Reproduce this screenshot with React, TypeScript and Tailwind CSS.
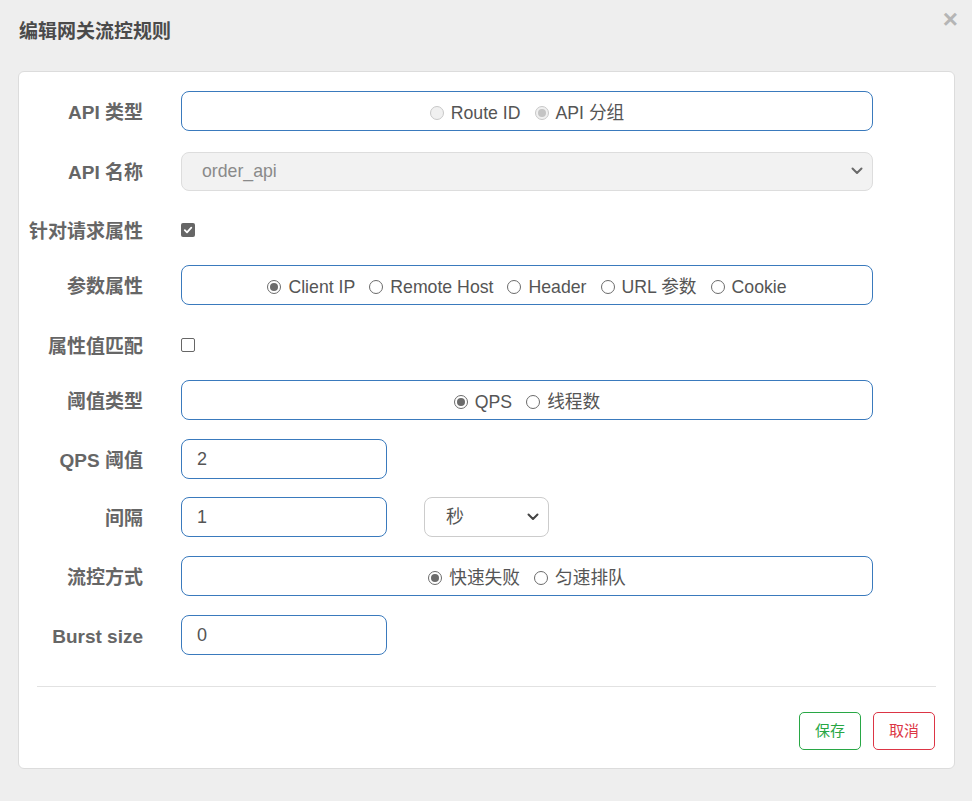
import React from "react";

const FONT = '"Liberation Sans", Arial, "Noto Sans CJK SC", sans-serif';

function Radio({ checked, disabled, label }: { checked?: boolean; disabled?: boolean; label: string }) {
  const outer = disabled ? "border-[#c8c8c8] bg-[#f0f0f0]" : "border-[#6b6b6b] bg-white";
  const dot = disabled ? "bg-[#c4c4c4]" : "bg-[#6b6b6b]";
  return (
    <span className="inline-flex items-center gap-[7px]">
      <span className={`w-[14px] h-[14px] rounded-full border flex items-center justify-center ${outer}`}>
        {checked && <span className={`w-[8px] h-[8px] rounded-full ${dot}`} />}
      </span>
      <span>{label}</span>
    </span>
  );
}

function Row({ label, mt, children }: { label: string; mt: string; children: React.ReactNode }) {
  return (
    <div className={`flex items-center h-[40px] ${mt}`}>
      <div className="w-[124px] text-right font-bold text-[19px] text-[#666666] leading-none pt-[3px]">{label}</div>
      <div className="ml-[38px] flex items-center">{children}</div>
    </div>
  );
}

function RadioBox({ children }: { children: React.ReactNode }) {
  return (
    <div className="w-[692px] h-[40px] border border-[#3a7abd] rounded-[8px] flex items-center justify-center gap-[14px] pt-[4px] text-[17.7px] text-[#555555]">
      {children}
    </div>
  );
}

function TextInput({ value }: { value: string }) {
  return (
    <div className="w-[206px] h-[40px] border border-[#3a7abd] rounded-[8px] flex items-center pl-[15px] text-[18px] text-[#555555]">
      {value}
    </div>
  );
}

function Chevron({ color = "#555" }: { color?: string }) {
  return (
    <svg width="12" height="8" viewBox="0 0 12 8" fill="none">
      <path d="M1.5 1.5 L6 6 L10.5 1.5" stroke={color} strokeWidth="2" strokeLinecap="round" strokeLinejoin="round" />
    </svg>
  );
}

export default function App() {
  return (
    <div className="w-[972px] h-[801px] bg-[#eeeeee] relative overflow-hidden" style={{ fontFamily: FONT }}>
      <div className="absolute right-[14px] top-[6px] text-[26px] leading-none font-bold text-[#b5b5b5]">×</div>
      <div className="pl-[19px] pt-[21px] h-[71px] text-[19px] font-bold text-[#4a4a4a] leading-[22px]">编辑网关流控规则</div>
      <div className="ml-[18px] w-[937px] h-[698px] bg-white border border-[#dcdcdc] rounded-[6px] flex flex-col">
        <Row label="API 类型" mt="mt-[19px]">
          <RadioBox>
            <Radio disabled label="Route ID" />
            <Radio disabled checked label="API 分组" />
          </RadioBox>
        </Row>
        <Row label="API 名称" mt="mt-[20px]">
          <div className="w-[692px] h-[39px] border border-[#dddddd] bg-[#f2f2f2] rounded-[8px] flex items-center justify-between pl-[20px] pr-[9px] text-[17.7px] text-[#8a8a8a]">
            <span>order_api</span>
            <Chevron color="#6a6a6a" />
          </div>
        </Row>
        <Row label="针对请求属性" mt="mt-[19px]">
          <span className="w-[14px] h-[14px] rounded-[2px] bg-[#666666] flex items-center justify-center">
            <svg width="10" height="10" viewBox="0 0 10 10" fill="none">
              <path d="M1.8 5.2 L4 7.4 L8.3 2.6" stroke="white" strokeWidth="1.8" strokeLinecap="round" strokeLinejoin="round" />
            </svg>
          </span>
        </Row>
        <Row label="参数属性" mt="mt-[15px]">
          <RadioBox>
            <Radio checked label="Client IP" />
            <Radio label="Remote Host" />
            <Radio label="Header" />
            <Radio label="URL 参数" />
            <Radio label="Cookie" />
          </RadioBox>
        </Row>
        <Row label="属性值匹配" mt="mt-[20px]">
          <span className="w-[14px] h-[14px] rounded-[2px] border border-[#666666] bg-white" />
        </Row>
        <Row label="阈值类型" mt="mt-[15px]">
          <RadioBox>
            <Radio checked label="QPS" />
            <Radio label="线程数" />
          </RadioBox>
        </Row>
        <Row label="QPS 阈值" mt="mt-[19px]">
          <TextInput value="2" />
        </Row>
        <Row label="间隔" mt="mt-[18px]">
          <TextInput value="1" />
          <div className="ml-[37px] w-[125px] h-[40px] border border-[#cccccc] rounded-[8px] flex items-center justify-between pl-[21px] pr-[9px] text-[18px] text-[#555555]">
            <span>秒</span>
            <Chevron color="#444" />
          </div>
        </Row>
        <Row label="流控方式" mt="mt-[19px]">
          <RadioBox>
            <Radio checked label="快速失败" />
            <Radio label="匀速排队" />
          </RadioBox>
        </Row>
        <Row label="Burst size" mt="mt-[19px]">
          <TextInput value="0" />
        </Row>
        <div className="mt-[31px] mx-[18px] h-px bg-[#e2e2e2]" />
        <div className="mt-[25px] mr-[19px] flex justify-end gap-[12px]">
          <div className="w-[62px] h-[38px] border border-[#28a745] rounded-[5px] flex items-center justify-center text-[15px] text-[#28a745]">保存</div>
          <div className="w-[62px] h-[38px] border border-[#dc3545] rounded-[5px] flex items-center justify-center text-[15px] text-[#dc3545]">取消</div>
        </div>
      </div>
    </div>
  );
}
